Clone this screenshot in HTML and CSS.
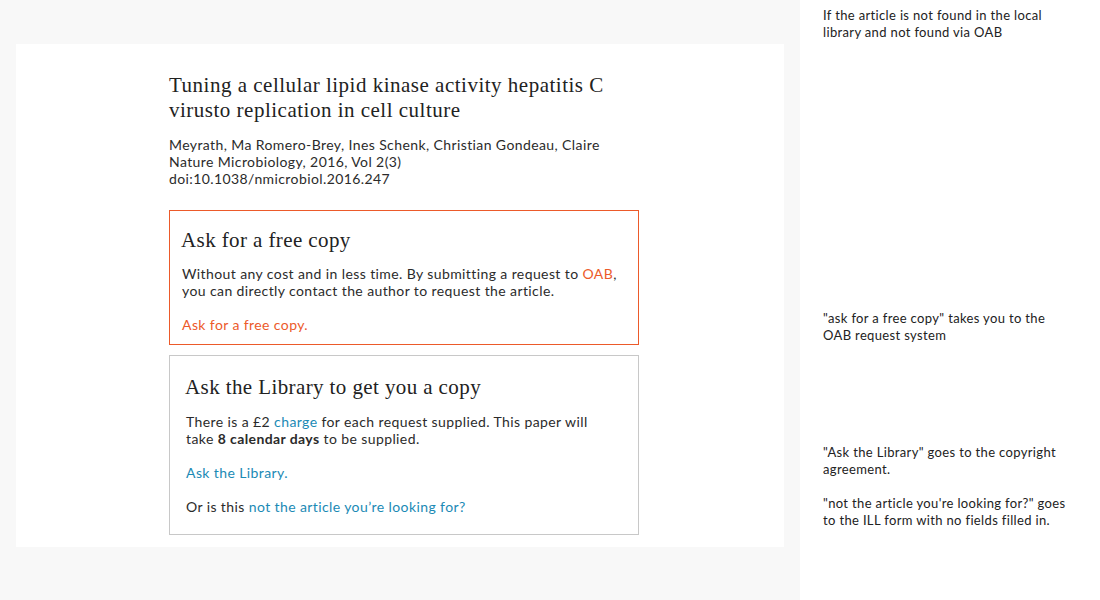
FILE: index.html
```html
<!DOCTYPE html>
<html>
<head>
<meta charset="utf-8">
<link rel="stylesheet" href="styles.css">
</head>
<body>
<div class="page">
  <main class="main">
    <div class="card">
      <h1 class="title">Tuning a cellular lipid kinase activity hepatitis C virusto replication in cell culture</h1>
      <div class="meta">
        <div>Meyrath, Ma Romero-Brey, Ines Schenk, Christian Gondeau, Claire</div>
        <div>Nature Microbiology, 2016, Vol 2(3)</div>
        <div>doi:10.1038/nmicrobiol.2016.247</div>
      </div>
      <section class="box box-free">
        <h2 class="box-title">Ask for a free copy</h2>
        <p class="text">Without any cost and in less time. By submitting a request to <a class="link-orange" href="#">OAB</a>, you can directly contact the author to request the article.</p>
        <p class="text"><a class="link-orange" href="#">Ask for a free copy.</a></p>
      </section>
      <section class="box box-lib">
        <h2 class="box-title">Ask the Library to get you a copy</h2>
        <p class="text">There is a £2 <a class="link-blue" href="#">charge</a> for each request supplied. This paper will take <strong>8 calendar days</strong> to be supplied.</p>
        <p class="text"><a class="link-blue" href="#">Ask the Library.</a></p>
        <p class="text">Or is this <a class="link-blue" href="#">not the article you’re looking for?</a></p>
      </section>
    </div>
  </main>
  <aside class="notes">
    <p class="note note-1">If the article is not found in the local library and not found via OAB</p>
    <p class="note note-2">"ask for a free copy" takes you to the OAB request system</p>
    <p class="note note-3">"Ask the Library" goes to the copyright agreement.</p>
    <p class="note note-4">"not the article you're looking for?" goes to the ILL form with no fields filled in.</p>
  </aside>
</div>
</body>
</html>
```
FILE: styles.css
```css
html, body {
  margin: 0;
  padding: 0;
}
body {
  font-family: Lato, "Open Sans", sans-serif;
  color: #2b2b2b;
  background: #ffffff;
}
.page {
  display: grid;
  grid-template-columns: 800px 300px;
  height: 600px;
}
.main {
  background: #f8f8f8;
  padding: 44px 16px 0 16px;
}
.card {
  background: #ffffff;
  height: 503px;
  box-sizing: border-box;
  padding: 29px 0 0 153px;
}
.title {
  font-family: "Liberation Serif", serif;
  font-weight: normal;
  font-size: 21px;
  line-height: 25px;
  letter-spacing: 0.5px;
  margin: 0;
  width: 470px;
  color: #222;
}
.meta {
  font-size: 14px;
  line-height: 17px;
  letter-spacing: 0.4px;
  margin-top: 13px;
}
.box {
  width: 470px;
  box-sizing: border-box;
}
.box-free {
  border: 1px solid #ec5a2a;
  margin-top: 23px;
  padding: 17px 12px 11px 11px;
}
.box-lib {
  border: 1px solid #c8c8c8;
  margin-top: 10px;
  padding: 19px 30px 19px 15px;
}
.box-title {
  font-family: "Liberation Serif", serif;
  font-weight: normal;
  font-size: 21px;
  line-height: 25px;
  letter-spacing: 0.4px;
  margin: 0 0 12px 0;
  color: #222;
}
.box-lib .box-title {
  margin-bottom: 13px;
}
.text {
  font-size: 14px;
  line-height: 17px;
  letter-spacing: 0.4px;
  margin: 0 0 17px 0;
}
.box-free .text {
  padding-left: 1px;
}
.box-lib .text {
  padding-left: 1px;
}
.text:last-child {
  margin-bottom: 0;
}
.text strong {
  font-weight: bold;
}
.link-orange {
  color: #ec5a2a;
  text-decoration: none;
}
.link-blue {
  color: #1b8ab5;
  text-decoration: none;
}
.notes {
  padding: 7px 30px 0 23px;
  font-size: 13px;
  line-height: 17px;
  letter-spacing: 0.35px;
  color: #222;
}
.note {
  margin: 0;
}
.note-2 {
  margin-top: 269px;
}
.note-3 {
  margin-top: 100px;
}
.note-4 {
  margin-top: 17px;
}
```
